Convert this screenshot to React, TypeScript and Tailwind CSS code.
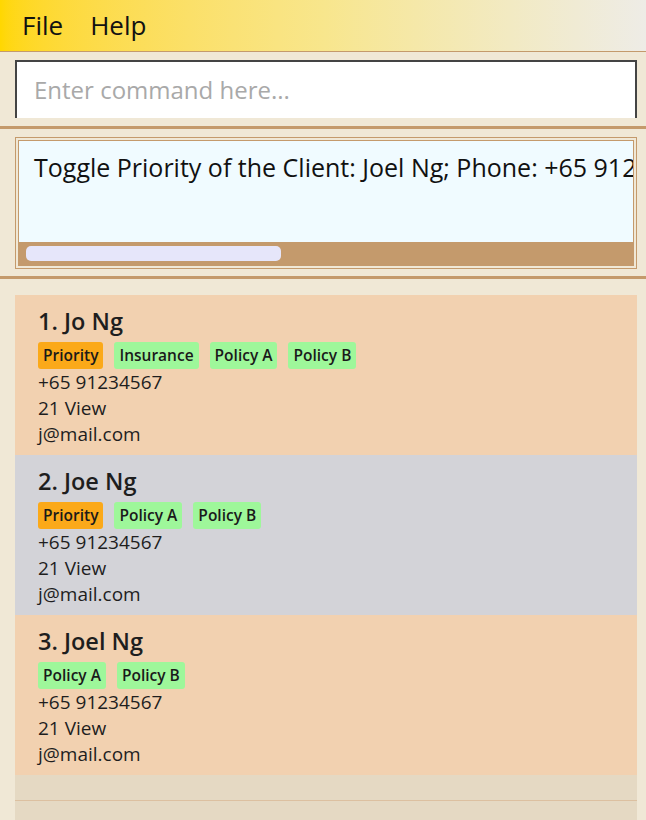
import React from "react";

type Person = { idx: number; name: string; tags: { label: string; priority?: boolean }[]; bg: string };

const people: Person[] = [
  { idx: 1, name: "Jo Ng", tags: [{ label: "Priority", priority: true }, { label: "Insurance" }, { label: "Policy A" }, { label: "Policy B" }], bg: "bg-[#f2d1b0]" },
  { idx: 2, name: "Joe Ng", tags: [{ label: "Priority", priority: true }, { label: "Policy A" }, { label: "Policy B" }], bg: "bg-[#d3d3d8]" },
  { idx: 3, name: "Joel Ng", tags: [{ label: "Policy A" }, { label: "Policy B" }], bg: "bg-[#f2d1b0]" },
];

function Card({ p }: { p: Person }) {
  return (
    <div className={`${p.bg} h-[160px] pl-[23px] pt-[12px] flex flex-col`}>
      <div className="text-[23.5px] leading-[29px] font-semibold text-[#1e1e1e]">
        {p.idx}. {p.name}
      </div>
      <div className="flex gap-[11px] mt-[6px]">
        {p.tags.map((t) => (
          <span
            key={t.label}
            className={`${t.priority ? "bg-[#fba919]" : "bg-[#9ef79a]"} h-[27px] px-[5px] rounded-[3px] text-[15.5px] leading-[27px] font-semibold text-[#1a1a1a]`}
          >
            {t.label}
          </span>
        ))}
      </div>
      <div className="text-[19px] leading-[26px] text-[#1e1e1e]">+65 91234567</div>
      <div className="text-[19px] leading-[26px] text-[#1e1e1e]">21 View</div>
      <div className="text-[19px] leading-[26px] text-[#1e1e1e]">j@mail.com</div>
    </div>
  );
}

export default function App() {
  return (
    <div
      className="w-[646px] h-[820px] overflow-hidden bg-[#f0e8d6] flex flex-col"
      style={{ fontFamily: "'Open Sans', 'Noto Sans', sans-serif" }}
    >
      {/* Menu bar */}
      <div className="h-[52px] shrink-0 border-b border-[#c49a6c] bg-linear-to-r from-[#ffd700] via-[#f8e68c] to-[#eeece6] flex items-center pl-[22px] gap-[27px] text-[26px] text-[#111]">
        <span>File</span>
        <span>Help</span>
      </div>

      {/* Command box */}
      <div className="pl-[15px] pr-[9px] pt-[8px] shrink-0">
        <div className="h-[58px] border-2 border-b-0 border-[#444] bg-white flex items-center pl-[17px] text-[24px] text-[#a9a9a9]">
          Enter command here...
        </div>
      </div>
      <div className="h-[8px] shrink-0" />
      <div className="h-[3px] bg-[#c49a6c] shrink-0" />

      {/* Result display */}
      <div className="pl-[15px] pr-[9px] pt-[8px] shrink-0">
        <div className="h-[132px] border border-[#c49a6c] p-[2px]">
          <div className="h-full border border-[#c49a6c] flex flex-col">
            <div className="flex-1 bg-[#f0fbff] overflow-hidden pl-[15px] pt-[10px]">
              <div className="text-[25px] whitespace-nowrap text-[#111] leading-[32px]">
                Toggle Priority of the Client: Joel Ng; Phone: +65 912
              </div>
            </div>
            <div className="h-[23px] bg-[#c49a6c] flex items-center pl-[7px]">
              <div className="w-[255px] h-[15px] rounded-[5px] bg-[#e6e6fa]" />
            </div>
          </div>
        </div>
      </div>
      <div className="h-[7px] shrink-0" />
      <div className="h-[3px] bg-[#c49a6c] shrink-0" />

      {/* List */}
      <div className="pl-[15px] pr-[9px] pt-[16px] flex-1 flex flex-col min-h-0">
        <div className="flex flex-col">
          {people.map((p) => (
            <Card key={p.idx} p={p} />
          ))}
        </div>
        <div className="h-[26px] bg-[#e5d9c3] border-b border-[#dcc0a0] shrink-0" />
        <div className="flex-1 bg-[#e5d9c3]" />
      </div>
    </div>
  );
}
